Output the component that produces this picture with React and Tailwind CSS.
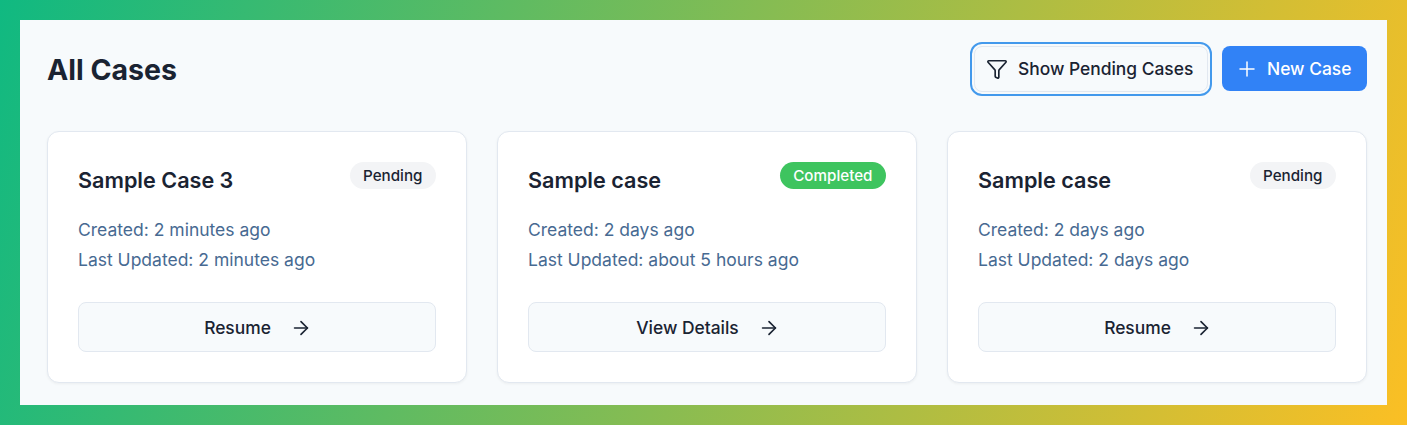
import { ArrowRight, Filter, Plus } from "lucide-react";

const cases = [
  { title: "Sample Case 3", status: "Pending", created: "2 minutes ago", updated: "2 minutes ago", action: "Resume" },
  { title: "Sample case", status: "Completed", created: "2 days ago", updated: "about 5 hours ago", action: "View Details" },
  { title: "Sample case", status: "Pending", created: "2 days ago", updated: "2 days ago", action: "Resume" },
];

function Card({ item }) {
  const done = item.status === "Completed";
  return (
    <div className="flex h-[252px] flex-col rounded-[12px] border border-[#e2e8f0] bg-white p-[30px] shadow-[0_1px_3px_rgba(0,0,0,0.05)]">
      <div className="flex items-start justify-between">
        <h3 className="mt-[2px] text-[21.6px] leading-[32px] font-semibold text-[#1a2332]">{item.title}</h3>
        <span className={done
          ? "rounded-full bg-[#3ec45f] px-[13.5px] text-[15.2px] leading-[27px] font-medium text-white"
          : "rounded-full bg-[#f3f4f6] px-[13.5px] text-[15.2px] leading-[27px] font-medium text-[#1a2332]"}>
          {item.status}
        </span>
      </div>
      <p className="mt-[19px] text-[17.5px] leading-[30px] text-[#476a92]">Created: {item.created}</p>
      <p className="text-[17.5px] leading-[30px] text-[#476a92]">Last Updated: {item.updated}</p>
      <button className="mt-auto flex h-[50px] w-full items-center justify-center gap-[19px] rounded-[8px] border border-[#e2e8f0] bg-[#f7fafc] pt-[1px] pl-[2px] text-[17.4px] font-medium text-[#1a2332]">
        <span className="pt-[2px]">{item.action}</span>
        <ArrowRight size={22} strokeWidth={1.8} />
      </button>
    </div>
  );
}

export default function App() {
  return (
    <div className="h-[425px] w-full bg-linear-[107deg,#10b981,#fbbf24] p-[20px] font-['Inter',sans-serif]">
      <div className="flex h-[385px] flex-col bg-[#f7fafc] pt-[24px] pr-[20px] pl-[27px]">
        <div className="flex h-[49px] items-center justify-between">
          <h1 className="pt-[1px] text-[28.5px] leading-[49px] font-bold text-[#1a2332]">All Cases</h1>
          <div className="flex items-center gap-[14px]">
            <button className="flex h-[46px] w-[234px] items-center gap-[10px] rounded-[8px] border border-[#e2e8f0] bg-[#f7fafc] pl-[11px] text-[17.4px] font-medium whitespace-nowrap text-[#1a2332] outline-2 outline-offset-[2px] outline-[#4399ec]">
              <Filter size={22} strokeWidth={1.8} />
              <span className="pt-[2px]">Show Pending Cases</span>
            </button>
            <button className="flex h-[45px] w-[145px] items-center gap-[8px] rounded-[8px] bg-[#3182f6] pl-[13px] text-[17.4px] font-medium whitespace-nowrap text-white">
              <Plus size={24} strokeWidth={1.5} />
              <span className="pt-[2px]">New Case</span>
            </button>
          </div>
        </div>
        <div className="mt-[38px] grid grid-cols-3 gap-[30px]">
          {cases.map((c, i) => <Card key={i} item={c} />)}
        </div>
      </div>
    </div>
  );
}
